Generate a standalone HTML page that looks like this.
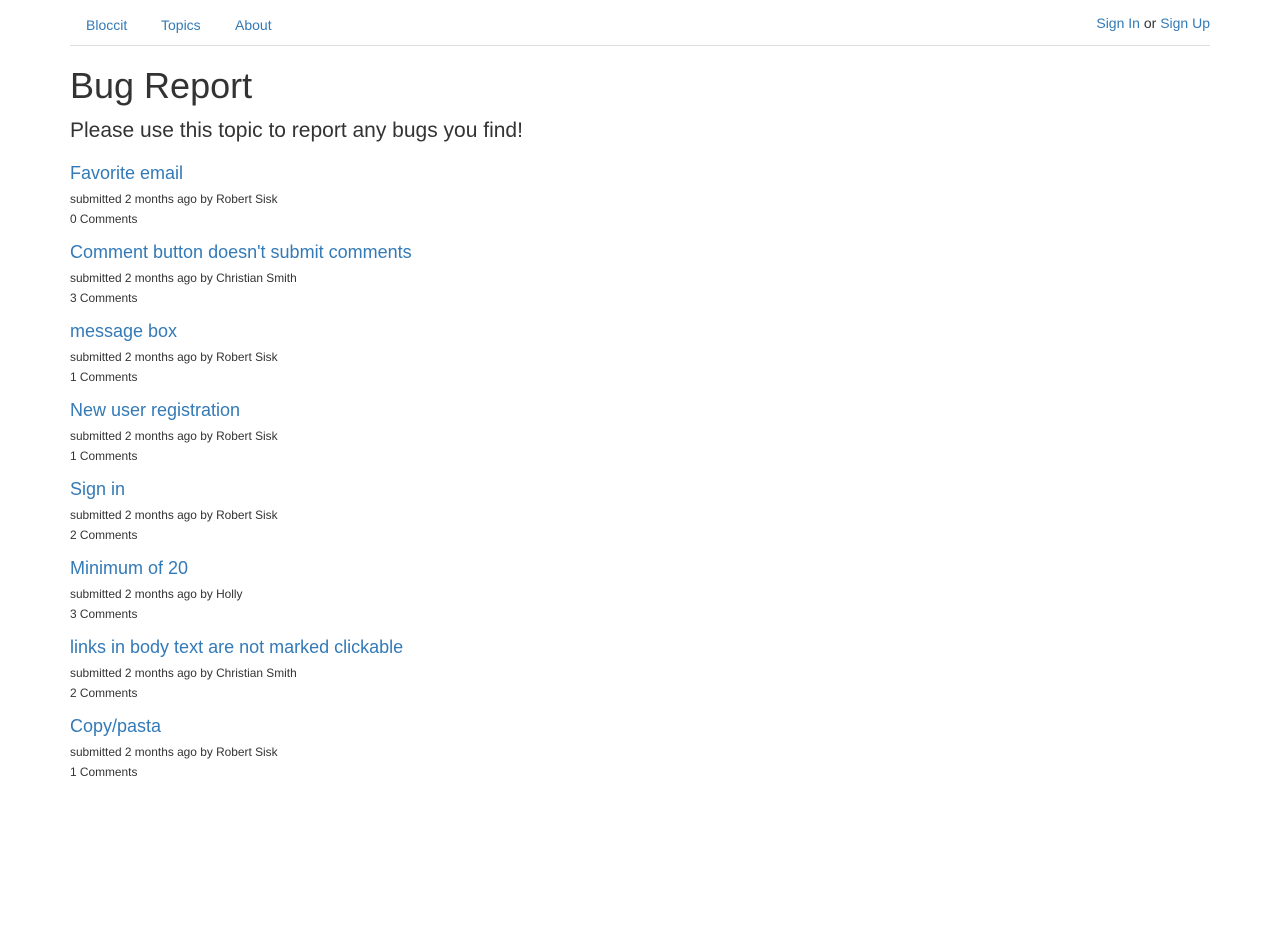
<!DOCTYPE html>
<html><head><meta charset="utf-8"><style>
body{margin:0;font-family:"Liberation Sans",Arial,sans-serif;color:#333;background:#fff;font-size:14px}
a{color:#337ab7;text-decoration:none}
.c{width:1140px;margin-left:70px;position:relative}
.nav{height:45px;border-bottom:1px solid #ddd;position:relative}
.nav a.t{position:absolute;top:16px;line-height:18px}
.right{position:absolute;right:0;top:14px;line-height:18px}
h1{position:absolute;top:64px;margin:0;font-size:36px;font-weight:500;line-height:44px}
.lead{position:absolute;top:118px;margin:0;font-size:21px;line-height:26px;font-weight:300}
.list{position:absolute;top:163px}
.it{margin-bottom:13px}
.it h4{margin:0 0 6px;font-size:18px;font-weight:500;line-height:20px}
.it div{font-size:11.9px;line-height:20px}
</style></head><body>
<div class="c">
<div class="nav">
<a class="t" style="left:16px">Bloccit</a>
<a class="t" style="left:91px">Topics</a>
<a class="t" style="left:165px">About</a>
<div class="right"><a>Sign In</a> or <a>Sign Up</a></div>
</div>
<h1>Bug Report</h1>
<p class="lead">Please use this topic to report any bugs you find!</p>
<div class="list">
<div class="it"><h4><a>Favorite email</a></h4><div>submitted 2 months ago by Robert Sisk</div><div>0 Comments</div></div>
<div class="it"><h4><a>Comment button doesn't submit comments</a></h4><div>submitted 2 months ago by Christian Smith</div><div>3 Comments</div></div>
<div class="it"><h4><a>message box</a></h4><div>submitted 2 months ago by Robert Sisk</div><div>1 Comments</div></div>
<div class="it"><h4><a>New user registration</a></h4><div>submitted 2 months ago by Robert Sisk</div><div>1 Comments</div></div>
<div class="it"><h4><a>Sign in</a></h4><div>submitted 2 months ago by Robert Sisk</div><div>2 Comments</div></div>
<div class="it"><h4><a>Minimum of 20</a></h4><div>submitted 2 months ago by Holly</div><div>3 Comments</div></div>
<div class="it"><h4><a>links in body text are not marked clickable</a></h4><div>submitted 2 months ago by Christian Smith</div><div>2 Comments</div></div>
<div class="it"><h4><a>Copy/pasta</a></h4><div>submitted 2 months ago by Robert Sisk</div><div>1 Comments</div></div>
</div>
</div>
</body></html>
